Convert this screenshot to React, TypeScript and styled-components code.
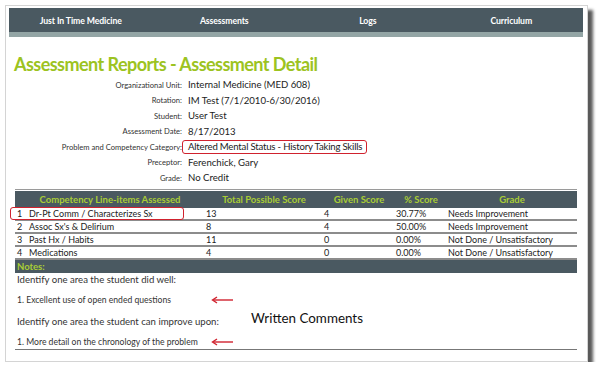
import styled, { createGlobalStyle } from "styled-components";

const GlobalStyle = createGlobalStyle`
  html, body {
    margin: 0;
    padding: 0;
    background: #ffffff;
  }
  body {
    font-family: "Lato", "Open Sans", sans-serif;
    color: #222;
  }
`;

const colors = {
  slate: "#4a5961",
  strip: "#93a5a5",
  green: "#9cc321",
  headGreen: "#a9cd35",
  red: "#d0222e",
  line: "#8c8c8c",
};

const navItems = ["Just In Time Medicine", "Assessments", "Logs", "Curriculum"];

const details: { label: string; value: string; boxed?: boolean }[] = [
  { label: "Organizational Unit:", value: "Internal Medicine (MED 608)" },
  { label: "Rotation:", value: "IM Test (7/1/2010-6/30/2016)" },
  { label: "Student:", value: "User Test" },
  { label: "Assessment Date:", value: "8/17/2013" },
  {
    label: "Problem and Competency Category:",
    value: "Altered Mental Status - History Taking Skills",
    boxed: true,
  },
  { label: "Preceptor:", value: "Ferenchick, Gary" },
  { label: "Grade:", value: "No Credit" },
];

const items = [
  { n: 1, name: "Dr-Pt Comm / Characterizes Sx", total: 13, given: 4, pct: "30.77%", grade: "Needs Improvement" },
  { n: 2, name: "Assoc Sx's & Delirium", total: 8, given: 4, pct: "50.00%", grade: "Needs Improvement" },
  { n: 3, name: "Past Hx / Habits", total: 11, given: 0, pct: "0.00%", grade: "Not Done / Unsatisfactory" },
  { n: 4, name: "Medications", total: 4, given: 0, pct: "0.00%", grade: "Not Done / Unsatisfactory" },
];

const Arrow = () => (
  <svg width="24" height="8" viewBox="0 0 24 8">
    <line x1="2" y1="4" x2="22" y2="4" stroke={colors.red} strokeWidth="1.4" />
    <path d="M6 1 L1.5 4 L6 7" fill="none" stroke={colors.red} strokeWidth="1.4" />
  </svg>
);

const App = () => {
  return (
    <>
      <GlobalStyle />
      <Card>
        <Nav>
          {navItems.map((item) => (
            <NavItem key={item}>{item}</NavItem>
          ))}
        </Nav>
        <Title>Assessment Reports - Assessment Detail</Title>
        <DetailGrid>
          {details.map((d) => (
            <DetailRow key={d.label}>
              <DetailLabel>{d.label}</DetailLabel>
              <DetailValue boxed={d.boxed}>{d.value}</DetailValue>
            </DetailRow>
          ))}
        </DetailGrid>
        <ScoreTable>
          <colgroup>
            <col style={{ width: "190px" }} />
            <col style={{ width: "118px" }} />
            <col style={{ width: "72px" }} />
            <col style={{ width: "52px" }} />
            <col />
          </colgroup>
          <thead>
            <tr>
              <HeadCell>Competency Line-items Assessed</HeadCell>
              <HeadCell>Total Possible Score</HeadCell>
              <HeadCell>Given Score</HeadCell>
              <HeadCell>% Score</HeadCell>
              <HeadCell>Grade</HeadCell>
            </tr>
          </thead>
          <tbody>
            {items.map((it) => (
              <tr key={it.n}>
                <Cell>
                  <ItemName highlight={it.n === 1}>
                    <ItemNum>{it.n}</ItemNum>
                    {it.name}
                  </ItemName>
                </Cell>
                <Cell>{it.total}</Cell>
                <Cell>{it.given}</Cell>
                <Cell>{it.pct}</Cell>
                <Cell>{it.grade}</Cell>
              </tr>
            ))}
            <tr>
              <NotesCell colSpan={5}>Notes:</NotesCell>
            </tr>
          </tbody>
        </ScoreTable>
        <Notes>
          <NoteText prompt>Identify one area the student did well:</NoteText>
          <span />
          <span />
          <NoteText>1. Excellent use of open ended questions</NoteText>
          <ArrowSlot>
            <Arrow />
          </ArrowSlot>
          <CommentsLabel>Written Comments</CommentsLabel>
          <NoteText prompt>Identify one area the student can improve upon:</NoteText>
          <span />
          <NoteText>1. More detail on the chronology of the problem</NoteText>
          <ArrowSlot>
            <Arrow />
          </ArrowSlot>
        </Notes>
      </Card>
    </>
  );
};

export default App;

// Styled Components
const Card = styled.div`
  box-sizing: border-box;
  margin: 5px 0 0 5px;
  width: 583px;
  height: 357px;
  padding: 2px 4px 0 3px;
  background: #fff;
  border: 1px solid #d4d4d4;
  box-shadow: 5px 5px 3px rgba(0, 0, 0, 0.65);
`;

const Nav = styled.div`
  display: grid;
  grid-template-columns: repeat(4, 1fr);
  height: 24px;
  align-items: center;
  background: ${colors.slate};
  border-bottom: 5px solid ${colors.strip};
`;

const NavItem = styled.div`
  text-align: center;
  color: #fff;
  font-size: 8.7px;
  font-weight: 700;
  letter-spacing: -0.1px;
`;

const Title = styled.h1`
  margin: 15px 0 0 5px;
  font-size: 18px;
  line-height: 24px;
  font-weight: 700;
  color: ${colors.green};
  letter-spacing: -0.55px;
`;

const DetailGrid = styled.div`
  display: flex;
  flex-direction: column;
  padding: 1px 0 3px;
  border-bottom: 1px solid #9a9a9a;
  margin: 0 6px;
`;

const DetailRow = styled.div`
  display: grid;
  grid-template-columns: 167px 1fr;
  column-gap: 6px;
  height: 15.5px;
  align-items: center;
`;

const DetailLabel = styled.div`
  text-align: right;
  font-size: 7.6px;
  color: #333;
`;

const DetailValue = styled.div<{ boxed?: boolean }>`
  font-size: 9.6px;
  color: #222;
  justify-self: start;
  ${(p) =>
    p.boxed &&
    `
    margin-left: -6px;
    padding: 0 4px 0 5px;
    height: 12px;
    line-height: 12px;
    border: 1.5px solid ${colors.red};
    border-radius: 3px;
    letter-spacing: -0.2px;
  `}
`;

const ScoreTable = styled.table`
  width: 562px;
  margin: 1px 6px 0;
  border-collapse: collapse;
  table-layout: fixed;
`;

const HeadCell = styled.th`
  height: 17px;
  padding: 0;
  background: ${colors.slate};
  color: ${colors.headGreen};
  font-size: 9.5px;
  font-weight: 700;
  text-align: center;
  white-space: nowrap;
`;

const Cell = styled.td`
  height: 11px;
  padding: 0 0 0 1px;
  font-size: 9px;
  line-height: 11px;
  color: #222;
  border-bottom: 2px solid ${colors.line};
  white-space: nowrap;
`;

const ItemName = styled.div<{ highlight?: boolean }>`
  position: relative;
  display: flex;
  padding-left: 1px;

  ${(p) =>
    p.highlight &&
    `
    &::after {
      content: "";
      position: absolute;
      left: -6px;
      top: -1px;
      width: 172px;
      height: 11px;
      border: 1.5px solid ${colors.red};
      border-radius: 3px;
    }
  `}
`;

const ItemNum = styled.span`
  width: 12px;
`;

const NotesCell = styled.td`
  height: 13px;
  padding: 0 0 0 2px;
  background: ${colors.slate};
  color: ${colors.headGreen};
  font-size: 9.5px;
  font-weight: 700;
`;

const Notes = styled.div`
  display: grid;
  grid-template-columns: 194px 28px 1fr;
  grid-template-rows: repeat(4, 14px);
  row-gap: 6.8px;
  align-items: center;
  margin: 0 6px;
  padding: 0 0 0 2px;
  border-bottom: 1px solid #777;
`;

const NoteText = styled.div<{ prompt?: boolean }>`
  font-size: ${(p) => (p.prompt ? "9.6px" : "8.6px")};
  color: #333;
  white-space: nowrap;
`;

const ArrowSlot = styled.div`
  display: flex;
  align-items: center;
`;

const CommentsLabel = styled.div`
  grid-row: 2 / span 3;
  grid-column: 3;
  align-self: center;
  padding-left: 12px;
  margin-top: -6px;
  font-size: 13.4px;
  color: #111;
`;
